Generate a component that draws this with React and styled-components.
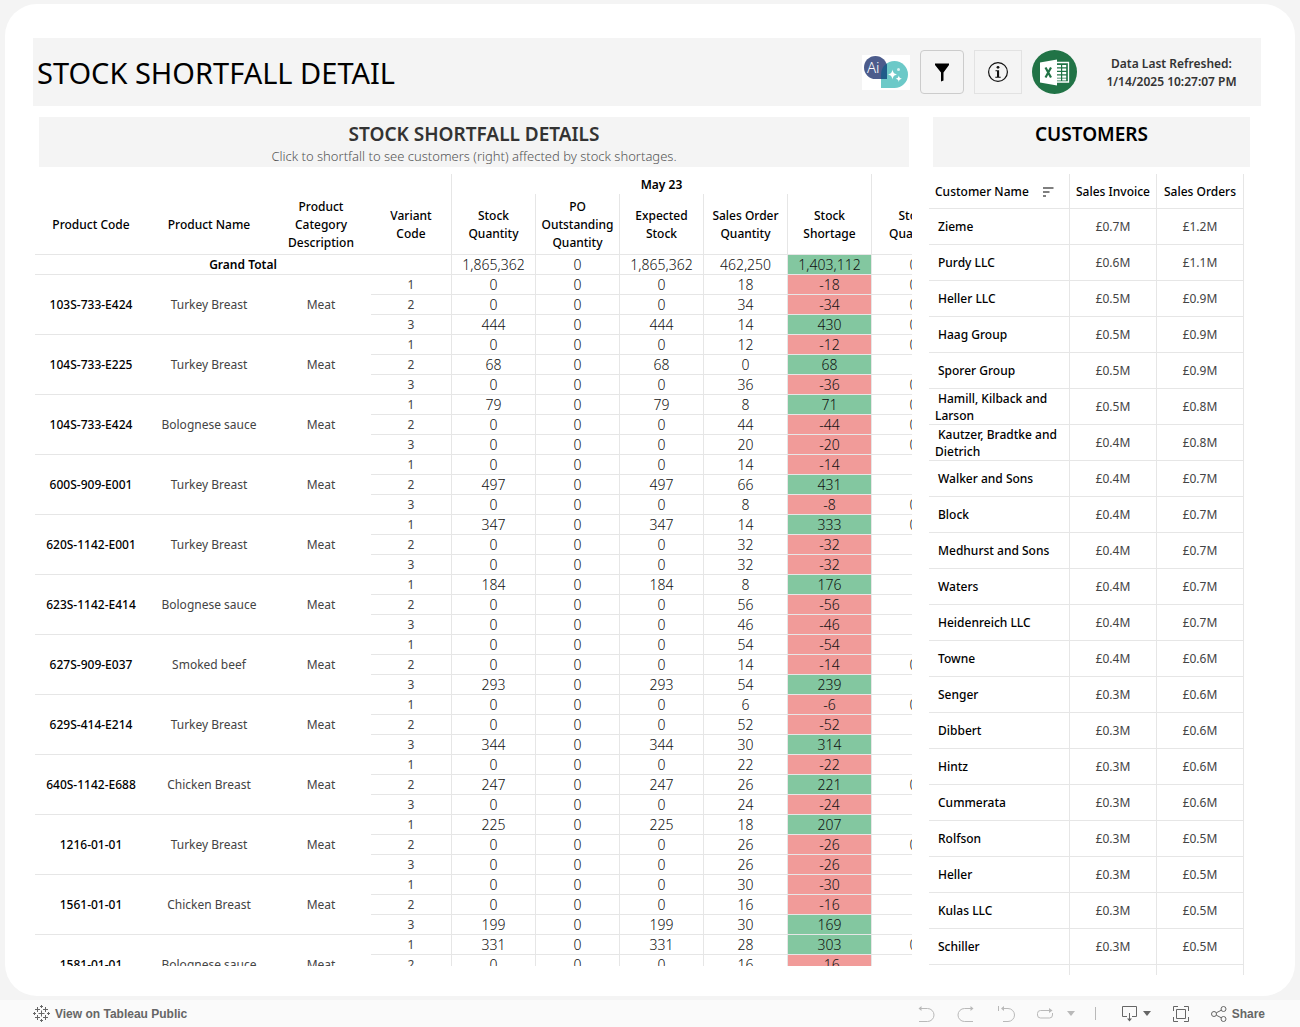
import styled, { createGlobalStyle } from "styled-components";

const line = "#e6e6e6";

// variants: [stock quantity, sales order quantity, shortage, next month's stock]
const products = [
  { code: "103S-733-E424", name: "Turkey Breast", variants: [["0", "18", "-18", "0"], ["0", "34", "-34", "0"], ["444", "14", "430", "0"]] },
  { code: "104S-733-E225", name: "Turkey Breast", variants: [["0", "12", "-12", "0"], ["68", "0", "68", ""], ["0", "36", "-36", "0"]] },
  { code: "104S-733-E424", name: "Bolognese sauce", variants: [["79", "8", "71", "0"], ["0", "44", "-44", "0"], ["0", "20", "-20", "0"]] },
  { code: "600S-909-E001", name: "Turkey Breast", variants: [["0", "14", "-14", ""], ["497", "66", "431", ""], ["0", "8", "-8", "0"]] },
  { code: "620S-1142-E001", name: "Turkey Breast", variants: [["347", "14", "333", "0"], ["0", "32", "-32", ""], ["0", "32", "-32", ""]] },
  { code: "623S-1142-E414", name: "Bolognese sauce", variants: [["184", "8", "176", ""], ["0", "56", "-56", ""], ["0", "46", "-46", ""]] },
  { code: "627S-909-E037", name: "Smoked beef", variants: [["0", "54", "-54", ""], ["0", "14", "-14", "0"], ["293", "54", "239", ""]] },
  { code: "629S-414-E214", name: "Turkey Breast", variants: [["0", "6", "-6", "0"], ["0", "52", "-52", ""], ["344", "30", "314", ""]] },
  { code: "640S-1142-E688", name: "Chicken Breast", variants: [["0", "22", "-22", ""], ["247", "26", "221", "0"], ["0", "24", "-24", ""]] },
  { code: "1216-01-01", name: "Turkey Breast", variants: [["225", "18", "207", ""], ["0", "26", "-26", "0"], ["0", "26", "-26", ""]] },
  { code: "1561-01-01", name: "Chicken Breast", variants: [["0", "30", "-30", ""], ["0", "16", "-16", ""], ["199", "30", "169", ""]] },
  { code: "1581-01-01", name: "Bolognese sauce", variants: [["331", "28", "303", "0"], ["0", "16", "-16", ""], ["", "", "", ""]] },
];

const customers = [
  ["Zieme", "£0.7M", "£1.2M"],
  ["Purdy LLC", "£0.6M", "£1.1M"],
  ["Heller LLC", "£0.5M", "£0.9M"],
  ["Haag Group", "£0.5M", "£0.9M"],
  ["Sporer Group", "£0.5M", "£0.9M"],
  ["Hamill, Kilback and Larson", "£0.5M", "£0.8M"],
  ["Kautzer, Bradtke and Dietrich", "£0.4M", "£0.8M"],
  ["Walker and Sons", "£0.4M", "£0.7M"],
  ["Block", "£0.4M", "£0.7M"],
  ["Medhurst and Sons", "£0.4M", "£0.7M"],
  ["Waters", "£0.4M", "£0.7M"],
  ["Heidenreich LLC", "£0.4M", "£0.7M"],
  ["Towne", "£0.4M", "£0.6M"],
  ["Senger", "£0.3M", "£0.6M"],
  ["Dibbert", "£0.3M", "£0.6M"],
  ["Hintz", "£0.3M", "£0.6M"],
  ["Cummerata", "£0.3M", "£0.6M"],
  ["Rolfson", "£0.3M", "£0.5M"],
  ["Heller", "£0.3M", "£0.5M"],
  ["Kulas LLC", "£0.3M", "£0.5M"],
  ["Schiller", "£0.3M", "£0.5M"],
  ["", "", ""],
];

const AiLogo = () => (
  <svg width="48" height="35" viewBox="0 0 48 35">
    <rect width="48" height="35" fill="#fff" />
    <path fill="#6cc9c8" d="M19 33V19.500a13.500 13.500 0 1 1 13.500 13.500z" />
    <path fill="#4c5c8c" d="M25 24H13.500a11.500 11.500 0 1 1 11.500-11.500z" />
    <path fill="#1f5d8a" d="M25 24h-6v-4.500a13.500 13.500 0 0 1 5.800-11.100l.2 4.100z" />
    <text x="5" y="18" fill="#fff" fontFamily="Noto Sans, sans-serif" fontSize="15" fontWeight="300">Ai</text>
    <path fill="#fff" d="M30.500 14.500c.7 3.300 1.500 4.200 4.700 5-3.200.8-4 1.700-4.700 5-.7-3.300-1.500-4.200-4.700-5 3.200-.8 4-1.700 4.700-5zM36.800 20.500c.5 2.200 1 2.700 3.100 3.200-2.100.5-2.600 1-3.100 3.200-.5-2.200-1-2.700-3.100-3.200 2.100-.5 2.600-1 3.100-3.200z" />
    <circle cx="36.500" cy="14.500" r="1.500" fill="#d6f1f0" />
  </svg>
);

const FunnelIcon = () => (
  <svg width="16" height="20" viewBox="0 0 16 20">
    <path d="M1 1.500h14v1.500L9.500 10.500v8l-2.500 1v-9L1 3z" fill="#000" />
  </svg>
);

const InfoIcon = () => (
  <svg width="22" height="22" viewBox="0 0 22 22">
    <circle cx="11" cy="11" r="9.400" fill="none" stroke="#111" strokeWidth="1.200" />
    <circle cx="11" cy="6.300" r="1.400" fill="#111" />
    <path d="M8.500 9.200h3.600v6.600h1.600v1H8.300v-1H10v-5.500H8.500z" fill="#111" />
  </svg>
);

const ExcelIcon = () => (
  <svg width="45" height="44" viewBox="0 0 45 44">
    <ellipse cx="22.500" cy="22" rx="22.500" ry="22" fill="#217346" />
    <path d="M24 12.500h12.500v19.500H24" fill="#217346" stroke="#fff" strokeWidth="1.300" />
    <path d="M25 15h4v2.200h-4zM30.200 15h4v2.200h-4zM25 18.500h4v2.200h-4zM30.200 18.500h4v2.200h-4zM25 22h4v2.200h-4zM30.200 22h4v2.200h-4zM25 25.500h4v2.200h-4zM30.200 25.500h4v2.200h-4zM25 28.600h4v1.800h-4zM30.200 28.600h4v1.800h-4z" fill="#fff" />
    <path d="M8 12.500 25 9.500v26L8 32.500z" fill="#fff" />
    <path d="m13.500 17.500 5.500 10M19 17.500l-5.500 10" stroke="#217346" strokeWidth="2.200" />
  </svg>
);

const SortIcon = () => (
  <svg width="11" height="11" viewBox="0 0 11 11">
    <path d="M0 1h10.500M0 5h6.500M0 9h3" stroke="#555" strokeWidth="1.600" />
  </svg>
);

const TableauIcon = () => (
  <svg width="17" height="17" viewBox="0 0 17 17" stroke="#666" strokeWidth="1" fill="none">
    <path d="M8.500 5.500v6M5.500 8.500h6M8.500 0v3M7 1.500h3M8.500 14v3M7 15.500h3M1.500 7v3M0 8.500h3M15.500 7v3M14 8.500h3" />
    <path d="M4.500 2v5M2 4.500h5M12.500 2v5M10 4.500h5M4.500 10v5M2 12.500h5M12.500 10v5M10 12.500h5" />
  </svg>
);

const UndoIcon = () => (
  <svg width="18" height="18" viewBox="0 0 18 18" stroke="currentColor" fill="none">
    <path d="M2 3.500h8.500a6 6 0 0 1 0 13H2" />
    <path d="m4.500 1-3 2.500 3 2.500z" fill="currentColor" stroke="none" />
  </svg>
);

const RedoIcon = () => (
  <svg width="18" height="18" viewBox="0 0 18 18" stroke="currentColor" fill="none">
    <path d="M16 3.500H7.500a6 6 0 0 0 0 13H16" />
    <path d="m13.500 1 3 2.500-3 2.500z" fill="currentColor" stroke="none" />
  </svg>
);

const RevertIcon = () => (
  <svg width="18" height="18" viewBox="0 0 18 18" stroke="currentColor" fill="none">
    <path d="M1.500 1v5M5 3.500h6a6 6 0 0 1 0 13H6" />
    <path d="M7 1 4 3.500 7 6z" fill="currentColor" stroke="none" />
  </svg>
);

const RefreshIcon = () => (
  <svg width="18" height="18" viewBox="0 0 18 18" stroke="currentColor" fill="none">
    <path d="M13 5.500H4.500a3 3 0 0 0-3 3v1.500a3 3 0 0 0 3 3h9a3 3 0 0 0 3-3V8" />
    <path d="m13 3 3.500 2.500L13 8z" fill="currentColor" stroke="none" />
  </svg>
);

const DownloadIcon = () => (
  <svg width="17" height="18" viewBox="0 0 17 18" stroke="currentColor" fill="none">
    <path d="M6 11.500H1.500v-10h14v10H11M8.500 8v7" />
    <path d="m6 13.500 2.500 3 2.500-3z" fill="currentColor" stroke="none" />
  </svg>
);

const FullScreenIcon = () => (
  <svg width="18" height="18" viewBox="0 0 18 18" stroke="currentColor" fill="none">
    <path d="M1.500 6V1.500H6M12 1.500h4.500V6M16.500 12v4.500H12M6 16.500H1.500V12M4.500 4.500h9v9h-9z" />
  </svg>
);

const ShareIcon = () => (
  <svg width="16" height="18" viewBox="0 0 16 18" stroke="currentColor" fill="none">
    <circle cx="3" cy="9" r="2.500" />
    <circle cx="12.500" cy="4" r="2.500" />
    <circle cx="12.500" cy="14" r="2.500" />
    <path d="m5.300 7.800 5-2.600M5.300 10.200l5 2.600" />
  </svg>
);

const Caret = () => (
  <svg width="8" height="5" viewBox="0 0 8 5">
    <path d="M0 0h8L4 5z" fill="currentColor" />
  </svg>
);

const StockTable = () => (
  <Table>
    <colgroup>
      <Col $w={112} />
      <Col $w={124} />
      <Col $w={100} />
      <Col $w={81} />
      {[1, 2, 3, 4, 5, 6].map((n) => (
        <Col key={n} $w={84} />
      ))}
    </colgroup>
    <thead>
      <MonthRow>
        <DividedTh colSpan="4" />
        <DividedTh colSpan="5">May 23</DividedTh>
        <th />
      </MonthRow>
      <MeasureRow>
        <th>Product Code</th>
        <th>Product Name</th>
        <th>Product Category Description</th>
        <DividedTh>Variant<br />Code</DividedTh>
        <DividedTh>Stock Quantity</DividedTh>
        <DividedTh>PO Outstanding Quantity</DividedTh>
        <DividedTh>Expected Stock</DividedTh>
        <DividedTh>Sales Order Quantity</DividedTh>
        <DividedTh>Stock Shortage</DividedTh>
        <th>Stock Quantity</th>
      </MeasureRow>
    </thead>
    <tbody>
      <tr>
        <TotalLabel colSpan="4">Grand Total</TotalLabel>
        <Value>1,865,362</Value>
        <Value>0</Value>
        <Value>1,865,362</Value>
        <Value>462,250</Value>
        <Shortage>1,403,112</Shortage>
        <Value>0</Value>
      </tr>
      {products.map((product) =>
        product.variants.map(([stock, orders, shortage, next], i) => (
          <tr key={product.code + i}>
            {i === 0 && (
              <>
                <Code rowSpan="3">{product.code}</Code>
                <Label rowSpan="3">{product.name}</Label>
                <Label rowSpan="3">Meat</Label>
              </>
            )}
            <Variant>{i + 1}</Variant>
            <Value>{stock}</Value>
            <Value>0</Value>
            <Value>{stock}</Value>
            <Value>{orders}</Value>
            <Shortage $short={shortage.startsWith("-")}>{shortage}</Shortage>
            <Value>{next}</Value>
          </tr>
        ))
      )}
    </tbody>
  </Table>
);

const CustomerTable = () => (
  <Customers>
    <colgroup>
      <col />
      <Col $w={87} />
      <Col $w={87} />
    </colgroup>
    <thead>
      <tr>
        <th>
          <SortHead>
            Customer Name
            <IconButton type="button" aria-label="Sort customers">
              <SortIcon />
            </IconButton>
          </SortHead>
        </th>
        <th>Sales Invoice</th>
        <th>Sales Orders</th>
      </tr>
    </thead>
    <tbody>
      {customers.map(([name, invoice, orders], i) => (
        <tr key={i}>
          <CustomerName>{name}</CustomerName>
          <Money>{invoice}</Money>
          <Money>{orders}</Money>
        </tr>
      ))}
    </tbody>
  </Customers>
);

const App = () => {
  return (
    <Page>
      <GlobalStyle />
      <Card>
        <Header>
          <Title>STOCK SHORTFALL DETAIL</Title>
          <Actions>
            <IconButton type="button" aria-label="Ai assistant">
              <AiLogo />
            </IconButton>
            <FilterButton type="button" aria-label="Filters">
              <FunnelIcon />
            </FilterButton>
            <InfoButton type="button" aria-label="Information">
              <InfoIcon />
            </InfoButton>
            <IconButton type="button" aria-label="Export to Excel">
              <ExcelIcon />
            </IconButton>
          </Actions>
          <Refreshed>
            Data Last Refreshed:
            <br />
            1/14/2025 10:27:07 PM
          </Refreshed>
        </Header>
        <Main>
          <StockPanel>
            <StockHeading>
              <h2>STOCK SHORTFALL DETAILS</h2>
              <p>Click to shortfall to see customers (right) affected by stock shortages.</p>
            </StockHeading>
            <StockTable />
          </StockPanel>
          <CustomerPanel>
            <CustomerHeading>
              <h2>CUSTOMERS</h2>
            </CustomerHeading>
            <CustomerTable />
          </CustomerPanel>
        </Main>
      </Card>
      <Footer>
        <PublicLink href="#">
          <TableauIcon />
          View on Tableau Public
        </PublicLink>
        <Tools>
          <ToolButton type="button" aria-label="Undo" disabled>
            <UndoIcon />
          </ToolButton>
          <ToolButton type="button" aria-label="Redo" disabled>
            <RedoIcon />
          </ToolButton>
          <ToolButton type="button" aria-label="Revert" disabled>
            <RevertIcon />
          </ToolButton>
          <ToolButton type="button" aria-label="Refresh" disabled $gap={13}>
            <RefreshIcon />
            <Caret />
          </ToolButton>
          <Separator />
          <ToolButton type="button" aria-label="Download" $gap={5}>
            <DownloadIcon />
            <Caret />
          </ToolButton>
          <ToolButton type="button" aria-label="Full screen">
            <FullScreenIcon />
          </ToolButton>
          <ToolButton type="button" $gap={5}>
            <ShareIcon />
            Share
          </ToolButton>
        </Tools>
      </Footer>
    </Page>
  );
};

export default App;

const GlobalStyle = createGlobalStyle`
  * {
    box-sizing: border-box;
  }
  body {
    margin: 0;
    background: #f4f4f4;
    color: #000;
    font-family: "Noto Sans", "Open Sans", sans-serif;
    font-size: 12px;
    line-height: 18px;
  }
  h1, h2, p {
    margin: 0;
  }
  svg {
    display: block;
    flex-shrink: 0;
  }
`;

const Page = styled.div`
  display: flex;
  flex-direction: column;
  height: 100vh;
`;

const Card = styled.div`
  display: flex;
  flex-direction: column;
  flex: 1;
  min-height: 0;
  margin: 4px 5px;
  padding: 34px 34px 0 28px;
  background: #fff;
  border-radius: 32px;
`;

const Header = styled.header`
  display: flex;
  align-items: center;
  flex-shrink: 0;
  height: 68px;
  padding: 0 23px 0 4px;
  background: #f4f4f4;
`;

const Title = styled.h1`
  flex: 1;
  padding-top: 2px;
  font-size: 29px;
  font-weight: 400;
  line-height: 38px;
`;

const Actions = styled.div`
  display: flex;
  align-items: center;
  gap: 10px;
  margin-right: 28px;
`;

const IconButton = styled.button`
  padding: 0;
  border: none;
  background: none;
  cursor: pointer;
`;

const FilterButton = styled.button`
  display: flex;
  align-items: center;
  justify-content: center;
  width: 44px;
  height: 44px;
  padding: 0;
  border: 1px solid #ccc;
  border-radius: 4px;
  background: none;
  cursor: pointer;
`;

const InfoButton = styled(FilterButton)`
  width: 48px;
  border-color: #e2e2e2;
  border-radius: 0;
`;

const Refreshed = styled.p`
  min-width: 133px;
  padding-top: 2px;
  color: #333;
  font-weight: 600;
  text-align: center;
`;

const Main = styled.main`
  display: grid;
  grid-template-columns: minmax(0, 1fr) 321px;
  grid-template-rows: minmax(0, 1fr);
  gap: 17px;
  flex: 1;
  min-height: 0;
  padding: 11px 11px 0 2px;
`;

const StockPanel = styled.section`
  margin-bottom: 30px;
  overflow: hidden;
`;

const CustomerPanel = styled.section`
  margin-bottom: 21px;
  overflow: hidden;
`;

const StockHeading = styled.div`
  height: 50px;
  margin: 0 3px 7px 4px;
  padding-top: 5px;
  background: #f4f4f4;
  color: #333;
  text-align: center;
  h2 {
    font-size: 19px;
    font-weight: 600;
    line-height: 24px;
  }
  p {
    color: #555;
    font-size: 13px;
    font-weight: 300;
    line-height: 20px;
  }
`;

const CustomerHeading = styled(StockHeading)`
  margin: 0 0 7px 4px;
  color: #000;
`;

const Table = styled.table`
  table-layout: fixed;
  width: 100%;
  min-width: 921px;
  border-collapse: separate;
  border-spacing: 0;
  text-align: center;
  th, td {
    padding: 0;
  }
  th {
    font-weight: 500;
  }
  tbody tr {
    height: 20px;
  }
`;

const Col = styled.col`
  width: ${(p) => p.$w}px;
`;

const MonthRow = styled.tr`
  height: 20px;
  && th {
    padding-top: 2px;
    font-weight: 600;
  }
`;

const MeasureRow = styled.tr`
  height: 61px;
  && th {
    padding: 2px 4px 0;
    border-bottom: 1px solid ${line};
  }
`;

const DividedTh = styled.th`
  border-right: 1px solid ${line};
`;

const TotalLabel = styled.th`
  border-right: 1px solid ${line};
  border-bottom: 1px solid ${line};
  && {
    font-weight: 600;
  }
`;

const Label = styled.td`
  border-bottom: 1px solid ${line};
  color: #444;
`;

const Code = styled(Label)`
  color: #000;
  font-weight: 500;
`;

const Variant = styled(Label)`
  border-right: 1px solid ${line};
`;

const Value = styled.td`
  border-right: 1px solid ${line};
  border-bottom: 1px solid ${line};
  color: #111;
  font-size: 14px;
  font-weight: 300;
`;

const Shortage = styled(Value)`
  background: ${(p) => (p.$short ? "#f19b99" : "#83c7a0")};
  background-clip: padding-box;
`;

const Customers = styled(Table)`
  width: calc(100% - 6px);
  min-width: 0;
  th, td {
    border-right: 1px solid ${line};
    border-bottom: 1px solid ${line};
  }
  th {
    padding-top: 2px;
  }
  th:first-child {
    padding: 2px 15px 0 6px;
  }
  thead tr {
    height: 35px;
  }
  tbody tr {
    height: 36px;
  }
`;

const SortHead = styled.div`
  display: flex;
  align-items: center;
  justify-content: space-between;
`;

const CustomerName = styled.td`
  && {
    padding-left: 6px;
  }
  line-height: 17px;
  font-weight: 500;
  text-align: left;
  text-indent: 3px;
`;

const Money = styled.td`
  color: #444;
`;

const Footer = styled.footer`
  display: flex;
  align-items: center;
  justify-content: space-between;
  height: 27px;
  padding: 0 35px 0 33px;
  background: #fafafa;
  color: #666;
  font-family: "Liberation Sans", Arial, sans-serif;
  font-weight: 700;
`;

const PublicLink = styled.a`
  display: flex;
  align-items: center;
  gap: 5px;
  color: inherit;
  text-decoration: none;
`;

const Tools = styled.div`
  display: flex;
  align-items: center;
  gap: 20px;
`;

const ToolButton = styled.button`
  display: flex;
  align-items: center;
  justify-content: center;
  gap: ${(p) => p.$gap || 0}px;
  min-width: 20px;
  padding: 0;
  border: none;
  background: none;
  color: #666;
  font: inherit;
  cursor: pointer;
  &:disabled {
    color: #b9b9b9;
  }
`;

const Separator = styled.span`
  width: 1px;
  height: 13px;
  margin-right: 5px;
  background: #b9b9b9;
`;
